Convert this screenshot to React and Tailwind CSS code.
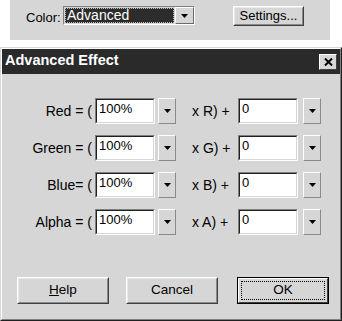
import React from 'react';

const font = { fontFamily: '"Liberation Sans", Arial, sans-serif' };

// Raised 3D button look (win95 style)
const Raised = ({ className = '', children }) => (
  <div className={`border border-t-white border-l-white border-r-[#404040] border-b-[#404040] bg-[#d6d6d6] ${className}`}>
    <div className="w-full h-full border border-t-[#e8e8e8] border-l-[#e8e8e8] border-r-[#8a8a8a] border-b-[#8a8a8a] flex items-center justify-center">
      {children}
    </div>
  </div>
);

const Arrow = () => (
  <svg width="7" height="4" viewBox="0 0 7 4">
    <path d="M0 0h7L3.5 4z" fill="#000" />
  </svg>
);

const Field = ({ value }) => (
  <div className="w-[60px] h-[26px] border border-t-[#808080] border-l-[#808080] border-r-white border-b-white">
    <div className="w-full h-full bg-white border border-t-[#202020] border-l-[#202020] border-r-[#d6d6d6] border-b-[#d6d6d6] flex items-center pl-[2px] pb-[4px] text-[13px] text-black">
      {value}
    </div>
  </div>
);

const DropBtn = () => (
  <div className="w-[18px] h-[26px] border border-t-white border-l-white border-r-[#8a8a8a] border-b-[#8a8a8a] bg-[#d6d6d6] flex items-center justify-center">
    <Arrow />
  </div>
);

const rows = [
  { label: 'Red = (', mult: 'x R) +' },
  { label: 'Green = (', mult: 'x G) +' },
  { label: 'Blue= (', mult: 'x B) +' },
  { label: 'Alpha = (', mult: 'x A) +' },
];

export default function App() {
  return (
    <div className="w-[342px] h-[321px] bg-white overflow-hidden flex flex-col text-black" style={font}>
      {/* color settings strip */}
      <div className="h-[47px] shrink-0">
        <div className="ml-[10px] w-[320px] h-[40px] bg-[#d6d6d6] flex items-start pt-[6px] text-[13px]">
          <span className="ml-[16px] mt-[2px] w-[37px]">Color:</span>
          <div className="w-[132px] h-[19px] border border-t-[#808080] border-l-[#808080] border-r-white border-b-white flex">
            <div className="flex-1 bg-[#2c2c2c] border border-dotted border-[#c0c0c0] m-[1px] text-white text-[14px] leading-[13px] pl-[1px]">
              Advanced
            </div>
            <div className="w-[19px] h-[17px] border border-t-white border-l-white border-r-[#6a6a6a] border-b-[#6a6a6a] bg-[#d6d6d6] flex items-center justify-center">
              <Arrow />
            </div>
          </div>
          <Raised className="ml-[38px] w-[71px] h-[20px]">
            <span className="text-[13px] leading-none pb-[2px]">Settings...</span>
          </Raised>
        </div>
      </div>

      {/* dialog */}
      <div className="flex-1 border border-t-[#d6d6d6] border-l-[#d6d6d6] border-r-[#202020] border-b-[#202020]">
        <div className="w-full h-full border border-t-white border-l-white border-r-[#808080] border-b-[#808080] bg-[#d6d6d6] flex flex-col">
          <div className="h-[25px] bg-[#2a2a2a] flex items-center justify-between pl-[3px] pr-[3px]">
            <span className="text-white font-bold text-[14.5px] leading-none pb-[2px]">Advanced Effect</span>
            <div className="w-[18px] h-[16px] border border-t-white border-l-white border-r-[#404040] border-b-[#404040] bg-[#d6d6d6] flex items-center justify-center">
              <svg width="9" height="8" viewBox="0 0 9 8">
                <path d="M1 0.5L8 7.5M8 0.5L1 7.5" stroke="#000" strokeWidth="2" />
              </svg>
            </div>
          </div>

          <div className="flex flex-col gap-[11px] mt-[24px]">
            {rows.map((r) => (
              <div key={r.label} className="flex items-center h-[26px] text-[14px]">
                <span className="w-[90px] text-right">{r.label}</span>
                <div className="ml-[3px]">
                  <Field value="100%" />
                </div>
                <div className="ml-[3px]">
                  <DropBtn />
                </div>
                <span className="ml-[16px] w-[46px]">{r.mult}</span>
                <Field value="0" />
                <div className="ml-[5px]">
                  <DropBtn />
                </div>
              </div>
            ))}
          </div>

          <div className="flex mt-[42px] pl-[15px] gap-[17px] text-[13.5px]">
            <Raised className="w-[92px] h-[27px]">
              <span className="pb-[1px]"><span className="underline">H</span>elp</span>
            </Raised>
            <Raised className="w-[92px] h-[27px]">
              <span className="pb-[1px]">Cancel</span>
            </Raised>
            <div className="ml-[2px] w-[92px] h-[27px] border border-black bg-[#d6d6d6]">
              <div className="w-full h-full border border-t-white border-l-white border-r-[#404040] border-b-[#404040] p-[2px]">
                <div className="w-full h-full border border-dotted border-black flex items-center justify-center">
                  <span className="pb-[1px]">OK</span>
                </div>
              </div>
            </div>
          </div>
        </div>
      </div>
    </div>
  );
}
